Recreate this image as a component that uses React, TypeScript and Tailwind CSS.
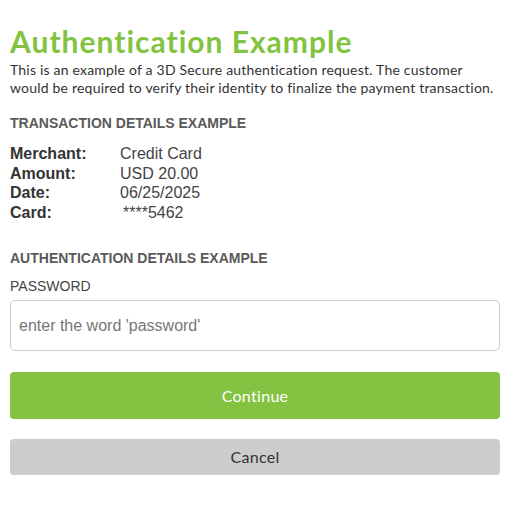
export default function App() {
  const rows = [
    { label: "Merchant:", value: "Credit Card" },
    { label: "Amount:", value: "USD 20.00" },
    { label: "Date:", value: "06/25/2025" },
    { label: "Card:", value: "****5462" },
  ];

  return (
    <div className="min-h-screen bg-white px-[10px] pt-[24px] text-[#333]">
      <h1 className="font-['Lato',sans-serif] text-[30px] font-bold leading-[34px] tracking-[1px] text-[#82c341]">
        Authentication Example
      </h1>
      <p className="mt-[3px] font-['Lato',sans-serif] text-[14px] leading-[18px] tracking-[0.2px] text-[#333]">
        This is an example of a 3D Secure authentication request. The customer would be required to verify their identity to finalize the payment transaction.
      </p>

      <h2 className="mt-[18px] font-['Liberation_Sans',Arial,sans-serif] text-[14px] font-bold leading-[16px] text-[#5a5a5a]">
        TRANSACTION DETAILS EXAMPLE
      </h2>

      <div className="mt-[13px] font-['Liberation_Sans',Arial,sans-serif] text-[16px] leading-[19.5px]">
        {rows.map((r) => (
          <div key={r.label} className="flex">
            <span className="w-[110px] font-bold text-[#333]">{r.label}</span>
            <span className={r.label === "Card:" ? "pl-[3px] text-[#444]" : "text-[#444]"}>{r.value}</span>
          </div>
        ))}
      </div>

      <h2 className="mt-[28px] font-['Liberation_Sans',Arial,sans-serif] text-[14px] font-bold leading-[16px] text-[#5a5a5a]">
        AUTHENTICATION DETAILS EXAMPLE
      </h2>
      <label className="mt-[12px] block font-['Liberation_Sans',Arial,sans-serif] text-[14px] leading-[16px] text-[#444]">
        PASSWORD
      </label>
      <input
        type="password"
        placeholder="enter the word 'password'"
        className="mt-[6px] block h-[51px] w-full rounded-[5px] border border-[#ccc] px-[8px] font-['Liberation_Sans',Arial,sans-serif] text-[16px] text-[#333] placeholder:text-[#777] outline-none"
      />

      <button className="mt-[21px] block h-[47px] w-full rounded-[4px] bg-[#84c341] font-['Lato',sans-serif] text-[16px] tracking-[0.3px] text-white">
        Continue
      </button>
      <button className="mt-[20px] block h-[36px] w-full rounded-[4px] bg-[#cccccc] font-['Lato',sans-serif] text-[16px] tracking-[0.3px] text-[#333]">
        Cancel
      </button>
    </div>
  );
}
